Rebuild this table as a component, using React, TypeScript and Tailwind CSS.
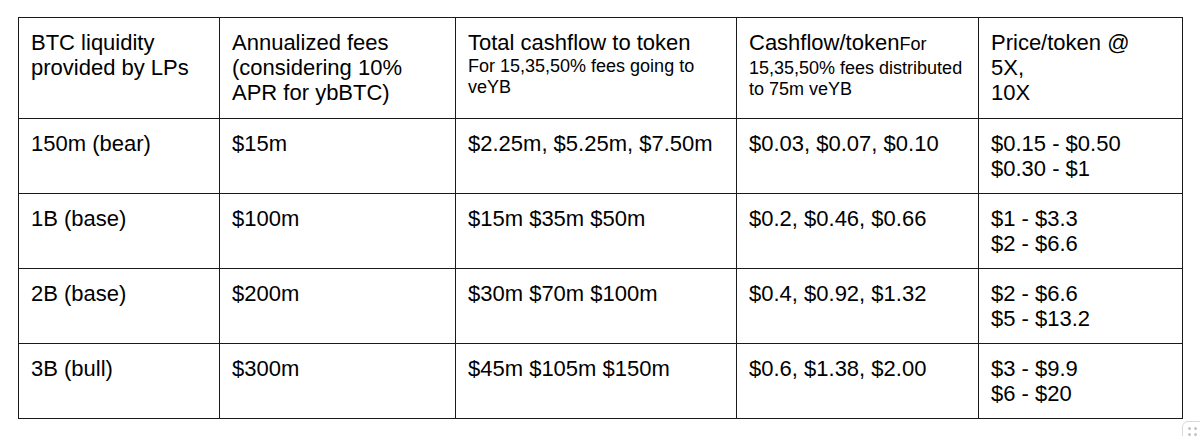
import React from "react";

type Row = {
  liquidity: string;
  fees: string;
  cashflow: string;
  perToken: string;
  price: [string, string];
};

const rows: Row[] = [
  {
    liquidity: "150m (bear)",
    fees: "$15m",
    cashflow: "$2.25m, $5.25m, $7.50m",
    perToken: "$0.03, $0.07, $0.10",
    price: ["$0.15 - $0.50", "$0.30 - $1"],
  },
  {
    liquidity: "1B (base)",
    fees: "$100m",
    cashflow: "$15m $35m $50m",
    perToken: "$0.2, $0.46, $0.66",
    price: ["$1 - $3.3", "$2 - $6.6"],
  },
  {
    liquidity: "2B (base)",
    fees: "$200m",
    cashflow: "$30m $70m $100m",
    perToken: "$0.4, $0.92, $1.32",
    price: ["$2 - $6.6", "$5 - $13.2"],
  },
  {
    liquidity: "3B (bull)",
    fees: "$300m",
    cashflow: "$45m $105m $150m",
    perToken: "$0.6, $1.38, $2.00",
    price: ["$3 - $9.9", "$6 - $20"],
  },
];

const cell = "border border-[#1a1a1a] align-top px-3 pt-3 pb-3";

export default function App() {
  return (
    <div
      className="relative w-[1200px] h-[436px] overflow-hidden bg-white text-black pl-[18px] pt-[17px]"
      style={{ fontFamily: '"Liberation Sans", Arial, Helvetica, sans-serif' }}
    >
      {/* Projection table */}
      <table className="table-fixed border-collapse w-[1164px] text-[22px] leading-[25px]">
        <colgroup>
          <col className="w-[201px]" />
          <col className="w-[236px]" />
          <col className="w-[281px]" />
          <col className="w-[242px]" />
          <col className="w-[204px]" />
        </colgroup>
        <thead>
          <tr>
            <th className={`${cell} pb-[13px] font-normal text-left`}>
              BTC liquidity
              <br />
              provided by LPs
            </th>
            <th className={`${cell} pb-[13px] font-normal text-left`}>
              Annualized fees
              <br />
              (considering 10%
              <br />
              APR for ybBTC)
            </th>
            <th className={`${cell} pb-[13px] font-normal text-left`}>
              <div>Total cashflow to token</div>
              <div className="text-[18px] leading-[21px] mt-[1px]">
                For 15,35,50% fees going to
                <br />
                veYB
              </div>
            </th>
            <th className={`${cell} pb-[13px] font-normal text-left`}>
              <div>
                Cashflow/token<span className="text-[18px]">For</span>
              </div>
              <div className="text-[18px] leading-[21px] mt-[1px]">
                15,35,50% fees distributed
                <br />
                to 75m veYB
              </div>
            </th>
            <th className={`${cell} pb-[13px] font-normal text-left`}>
              Price/token @
              <br />
              5X,
              <br />
              10X
            </th>
          </tr>
        </thead>
        <tbody>
          {rows.map((r) => (
            <tr key={r.liquidity}>
              <td className={cell}>{r.liquidity}</td>
              <td className={cell}>{r.fees}</td>
              <td className={`${cell} whitespace-nowrap`}>{r.cashflow}</td>
              <td className={cell}>{r.perToken}</td>
              <td className={cell}>
                {r.price[0]}
                <br />
                {r.price[1]}
              </td>
            </tr>
          ))}
        </tbody>
      </table>

      {/* drag handle peeking in at the corner */}
      <div className="absolute left-[1182px] top-[421px] w-[26px] h-[26px] rounded-md border border-[#d9d9d9] bg-white p-[5px]">
        <div className="grid grid-cols-2 gap-[3px] w-[9px]">
          <span className="w-[3px] h-[3px] rounded-full bg-[#c4c4c4]" />
          <span className="w-[3px] h-[3px] rounded-full bg-[#c4c4c4]" />
          <span className="w-[3px] h-[3px] rounded-full bg-[#c4c4c4]" />
          <span className="w-[3px] h-[3px] rounded-full bg-[#c4c4c4]" />
        </div>
      </div>
    </div>
  );
}
